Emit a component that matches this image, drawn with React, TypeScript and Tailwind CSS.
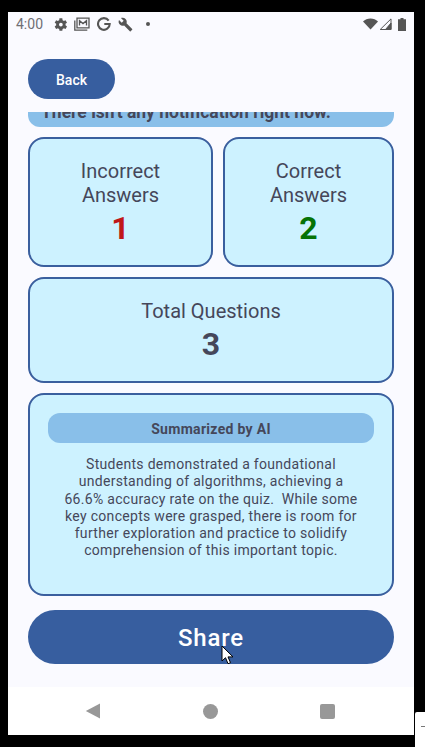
import React from 'react';

const cardClass = 'rounded-[16px] border-2 border-[#3a5f9e] bg-[#cdf2ff] text-[#45475a] text-center';

const StatusBar = () => (
  <div className="flex h-[24px] items-center justify-between pl-[8px] pr-[8px] text-[#6a6a70]">
    <div className="flex items-center">
      <span className="text-[14px] leading-none text-[#6f6f75]">4:00</span>
      <svg className="ml-[10px]" width="15" height="15" viewBox="0 0 24 24" fill="#555">
        <path d="M20 13.200a8 8 0 0 0 0-2.400l2.400-1.800-2.300-4-2.800 1.200a8 8 0 0 0-2-1.200L14.900 2h-4.600l-.4 3a8 8 0 0 0-2 1.200L5 5 2.700 9l2.400 1.800a8 8 0 0 0 0 2.400L2.700 15 5 19l2.900-1.200a8 8 0 0 0 2 1.200l.4 3h4.600l.4-3a8 8 0 0 0 2-1.200l2.800 1.200 2.300-4zM12.600 15a3 3 0 1 1 0-6 3 3 0 0 1 0 6z" />
      </svg>
      <svg className="ml-[6px]" width="16" height="14" viewBox="0 0 16 14" fill="none" stroke="#555" strokeWidth="1.3">
        <path d="M3 1.200h12v9.600H3z" />
        <path d="M.8 3.500v9.700h12.500" />
        <path d="M5.500 8.500V3.700L9 6.600l3.500-2.900v4.800" />
      </svg>
      <svg className="ml-[7px]" width="14" height="14" viewBox="0 0 24 24" fill="none" stroke="#555" strokeWidth="3.6">
        <path d="M20 6.200A10 10 0 1 0 21.800 12H12.500" />
      </svg>
      <svg className="ml-[7px]" width="15" height="15" viewBox="0 0 24 24" fill="#555">
        <path d="M22.700 19l-9.100-9.100c.9-2.300.4-5-1.500-6.900-2-2-5-2.400-7.400-1.300L9 6 6 9 1.600 4.700C.4 7.100.9 10.100 2.900 12.100c1.900 1.900 4.600 2.400 6.900 1.500l9.100 9.100c.4.400 1 .4 1.400 0l2.300-2.300c.5-.4.5-1.100.1-1.400z" />
      </svg>
      <span className="ml-[13px] h-[4px] w-[4px] rounded-full bg-[#555]" />
    </div>
    <div className="flex items-center">
      <svg width="15" height="12" viewBox="0 0 15 12" fill="#555">
        <path d="M0 3.500C2 1.500 4.600.5 7.500.5s5.500 1 7.500 3l-7.500 8z" />
      </svg>
      <svg width="13" height="12" viewBox="0 0 13 12" fill="none" stroke="#555" strokeWidth="1" className="ml-[1px]">
        <path d="M12 .9V11.500H1.200z" />
        <path d="M12 5v6.500H6.500z" fill="#555" />
      </svg>
      <svg width="8" height="13" viewBox="0 0 8 13" fill="#555" className="ml-[6px]">
        <path d="M2.500 0h3v1.300H8V13H0V1.300h2.500z" />
      </svg>
    </div>
  </div>
);

const NavBar = () => (
  <div className="flex h-[48px] items-center justify-between bg-white pl-[77px] pr-[79px]">
    <svg width="16" height="16" viewBox="0 0 16 16" fill="#989898">
      <path d="M15 .5v15L.8 8z" />
    </svg>
    <span className="h-[15px] w-[15px] rounded-full bg-[#989898]" />
    <span className="h-[15px] w-[15px] rounded-[2px] bg-[#989898]" />
  </div>
);

export default function App() {
  return (
    <div className="relative h-[747px] w-[425px] overflow-hidden bg-black font-['Roboto',sans-serif]">
      <div className="ml-[8px] w-[406px] pt-[12px]">
        <div className="flex h-[723px] flex-col bg-[#fafaff]">
          <StatusBar />
          <div className="px-[20px] pt-[23px]">
            <button className="h-[40px] w-[87px] rounded-full bg-[#375e9f] pt-[2px] text-[14px] font-medium text-white">
              Back
            </button>
          </div>
          <div className="mx-[20px] mt-[13px] flex flex-col gap-[10px] overflow-hidden">
            <div className="-mt-[13px] h-[28px] rounded-b-[12px] bg-[#89bfe9] pl-[13px] text-left text-[17.5px] font-bold leading-[26px] text-[#45475a]">
              There isn't any notification right now.
            </div>
            <div className="flex gap-[10px]">
              <div className={`${cardClass} h-[130px] w-[185px] pt-[20px]`}>
                <p className="text-[20px] leading-[24px]">
                  Incorrect
                  <br />
                  Answers
                </p>
                <p className="mt-[2px] text-[32px] font-bold leading-[38px] text-[#c01818]">1</p>
              </div>
              <div className={`${cardClass} h-[130px] w-[171px] pt-[20px]`}>
                <p className="text-[20px] leading-[24px]">
                  Correct
                  <br />
                  Answers
                </p>
                <p className="mt-[2px] text-[32px] font-bold leading-[38px] text-[#067306]">2</p>
              </div>
            </div>
            <div className={`${cardClass} h-[106px] pt-[20px]`}>
              <p className="text-[20px] leading-[24px]">Total Questions</p>
              <p className="mt-[2px] text-[32px] font-bold leading-[38px]">3</p>
            </div>
            <div className={`${cardClass} h-[203px] px-[18px] pt-[18px]`}>
              <div className="h-[30px] rounded-[12px] bg-[#89bfe9] pt-[1px] text-[14px] font-bold leading-[30px] tracking-[0.3px]">
                Summarized by AI
              </div>
              <p className="mt-[13px] whitespace-pre-line text-[14px] leading-[17.3px] tracking-[0.3px]">
                {'Students demonstrated a foundational\nunderstanding of algorithms, achieving a\n66.6% accuracy rate on the quiz.\u00a0 While some\nkey concepts were grasped, there is room for\nfurther exploration and practice to solidify\ncomprehension of this important topic.'}
              </p>
            </div>
          </div>
          <div className="px-[20px] pt-[14px]">
            <button className="h-[54px] w-full rounded-full bg-[#375e9f] pt-[2px] text-[24px] font-medium tracking-[0.8px] text-white">
              Share
            </button>
          </div>
          <div className="flex-1" />
          <NavBar />
        </div>
      </div>

      {/* mouse pointer from the recording */}
      <svg className="absolute left-[221px] top-[645px]" width="13" height="20" viewBox="0 0 13 20">
        <path d="M1 1v15l3.500-3.300 2.500 6 2.500-1-2.500-5.800h5z" fill="#fff" stroke="#000" strokeWidth="1" />
      </svg>
      {/* sliver of a window peeking in at the corner */}
      <div className="absolute left-[415px] top-[712px] h-[35px] w-[10px] rounded-tl-[2px] bg-white">
        <div className="ml-[6px] mt-[14px] h-px w-[4px] bg-[#777]" />
      </div>
    </div>
  );
}
